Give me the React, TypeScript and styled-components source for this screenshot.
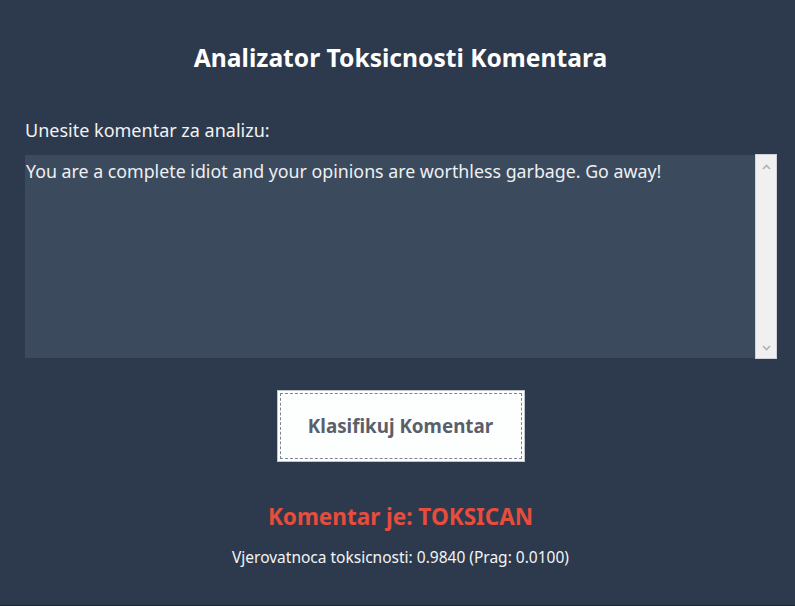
import React, { useState } from "react";
import styled, { createGlobalStyle } from "styled-components";

const GlobalStyle = createGlobalStyle`
  html, body {
    margin: 0;
    padding: 0;
    background: #2d3a4e;
  }
  #root {
    min-height: 100vh;
  }
`;

const Window = styled.div`
  width: 795px;
  height: 606px;
  box-sizing: border-box;
  background: #2d3a4e;
  font-family: "Noto Sans", "Open Sans", sans-serif;
  display: flex;
  flex-direction: column;
  border-bottom: 1px solid #1c2533;
  padding: 0 19px 0 25px;
  color: #ffffff;
`;

const Title = styled.h1`
  margin: 41px 0 0;
  font-size: 24.6px;
  font-weight: 700;
  line-height: 34px;
  text-align: center;
`;

const Label = styled.label`
  margin-top: 42px;
  font-size: 18px;
  line-height: 26px;
  color: #f2f2f2;
`;

const EditorRow = styled.div`
  margin: 12px -1px 0 0;
  height: 203px;
  display: flex;
`;

const CommentInput = styled.textarea`
  flex: 1;
  margin: 0;
  border: none;
  outline: none;
  resize: none;
  overflow: hidden;
  padding: 3px 1px;
  background: #3b4a5d;
  color: #eef0f2;
  font-family: "Noto Sans", "Open Sans", sans-serif;
  font-size: 17.8px;
  line-height: 26px;
`;

const ScrollTrack = styled.div`
  width: 22px;
  margin: -1px 0;
  box-sizing: border-box;
  background: #f0f0f0;
  border: 1px solid #cfd2d8;
  display: flex;
  flex-direction: column;
  justify-content: space-between;
  align-items: center;
  padding: 9px 0 7px;
`;

const Chevron = styled.svg`
  width: 9px;
  height: 6px;
  display: block;
`;

const ButtonRow = styled.div`
  margin-top: 32px;
  display: flex;
  justify-content: center;
`;

const ClassifyButton = styled.button`
  width: 248px;
  height: 72px;
  box-sizing: border-box;
  background: #fdfefe;
  border: 1px solid #c1c6ce;
  outline: 1px dashed #7d8591;
  outline-offset: -4px;
  font-family: "Noto Sans", "Open Sans", sans-serif;
  font-size: 18.8px;
  font-weight: 700;
  color: #59606c;
  cursor: pointer;
`;

const Verdict = styled.div<{ $toxic: boolean }>`
  margin-top: 40px;
  text-align: center;
  font-size: 22.5px;
  line-height: 30px;
  font-weight: 700;
  color: ${({ $toxic }) => ($toxic ? "#e74c3c" : "#2ecc71")};
`;

const Probability = styled.div`
  margin-top: 14px;
  text-align: center;
  font-size: 15.5px;
  line-height: 22px;
  color: #f4f4f4;
`;

const App: React.FC = () => {
  const [comment, setComment] = useState(
    "You are a complete idiot and your opinions are worthless garbage. Go away!"
  );
  const score = 0.984;
  const threshold = 0.01;
  const toxic = score >= threshold;

  return (
    <>
      <GlobalStyle />
      <Window>
        <Title>Analizator Toksicnosti Komentara</Title>
        <Label>Unesite komentar za analizu:</Label>
        <EditorRow>
          <CommentInput value={comment} onChange={(e) => setComment(e.target.value)} spellCheck={false} />
          <ScrollTrack>
            <Chevron viewBox="0 0 9 6">
              <path d="M1 5 L4.5 1.5 L8 5" fill="none" stroke="#b0b0b0" strokeWidth="1.6" />
            </Chevron>
            <Chevron viewBox="0 0 9 6">
              <path d="M1 1 L4.5 4.5 L8 1" fill="none" stroke="#b0b0b0" strokeWidth="1.6" />
            </Chevron>
          </ScrollTrack>
        </EditorRow>
        <ButtonRow>
          <ClassifyButton>Klasifikuj Komentar</ClassifyButton>
        </ButtonRow>
        <Verdict $toxic={toxic}>Komentar je: {toxic ? "TOKSICAN" : "NIJE TOKSICAN"}</Verdict>
        <Probability>
          Vjerovatnoca toksicnosti: {score.toFixed(4)} (Prag: {threshold.toFixed(4)})
        </Probability>
      </Window>
    </>
  );
};

export default App;
